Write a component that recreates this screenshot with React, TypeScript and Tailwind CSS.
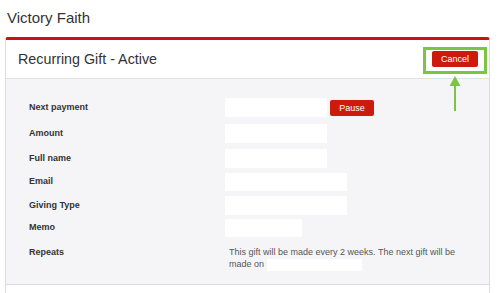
import React from "react";

const font = { fontFamily: '"Liberation Sans", Arial, sans-serif' };

function Field({ w, h = 19 }: { w: number; h?: number }) {
  return <div className="bg-white" style={{ width: w, height: h }} />;
}

export default function App() {
  return (
    <div className="relative w-[499px] h-[293px] overflow-hidden bg-white text-[#333]" style={font}>
      <div className="h-[37px] pl-[7px] pt-[9px] text-[15px] leading-[18px] text-[#333]">Victory Faith</div>
      <div className="ml-[5px] w-[485px] h-[256px] border-x border-[#dcdcdc] border-t-[3px] border-t-[#d10f0f] rounded-t-[3px]">
        <div className="h-[39px] flex items-center justify-between pl-[12px] pr-[11px] border-b border-[#e2e2e2] bg-white">
          <div className="text-[14.3px] leading-[18px] text-[#333]">Recurring Gift - Active</div>
          <button className="w-[46px] h-[16px] rounded-[2px] bg-[#cc1a0d] text-white text-[9px] leading-[16px] flex items-center justify-center">
            Cancel
          </button>
        </div>
        <div className="h-[206px] bg-[#f5f5f7] border-b border-[#dcdcdc] pl-[23px] pt-[19px] flex flex-col text-[9px]">
          <div className="flex items-center h-[19px]">
            <div className="w-[196px] font-bold">Next payment</div>
            <Field w={102} />
            <button className="ml-[3px] w-[44px] h-[16px] rounded-[2px] bg-[#cc1a0d] text-white text-[9px] leading-[16px] flex items-center justify-center">
              Pause
            </button>
          </div>
          <div className="flex items-center h-[19px] mt-[7px]">
            <div className="w-[196px] font-bold">Amount</div>
            <Field w={102} />
          </div>
          <div className="flex items-center h-[19px] mt-[6px]">
            <div className="w-[196px] font-bold">Full name</div>
            <Field w={102} />
          </div>
          <div className="flex items-center h-[18px] mt-[5px]">
            <div className="w-[196px] font-bold">Email</div>
            <Field w={122} h={18} />
          </div>
          <div className="flex items-center h-[19px] mt-[5px]">
            <div className="w-[196px] font-bold">Giving Type</div>
            <Field w={122} />
          </div>
          <div className="flex items-center h-[18px] mt-[4px]">
            <div className="w-[196px] font-bold">Memo</div>
            <Field w={77} h={18} />
          </div>
          <div className="flex items-start mt-[9px]">
            <div className="w-[196px] font-bold leading-[12px]">Repeats</div>
            <div className="pl-[4px] w-[240px] leading-[12px] text-[#555]">
              This gift will be made every 2 weeks. The next gift will be made on{" "}
              <span className="inline-block align-middle w-[95px] h-[12px] bg-white" />
            </div>
          </div>
        </div>
      </div>
      {/* annotation overlay */}
      <div className="absolute left-[423px] top-[47px] w-[64px] h-[27px] border-[3px] border-[#7cc444]" />
      <svg className="absolute left-[449px] top-[76px]" width="12" height="36" viewBox="0 0 12 36">
        <polygon points="6,0 0.5,10 11.5,10" fill="#7cc444" />
        <rect x="5" y="9" width="2" height="26" fill="#7cc444" />
      </svg>
    </div>
  );
}
